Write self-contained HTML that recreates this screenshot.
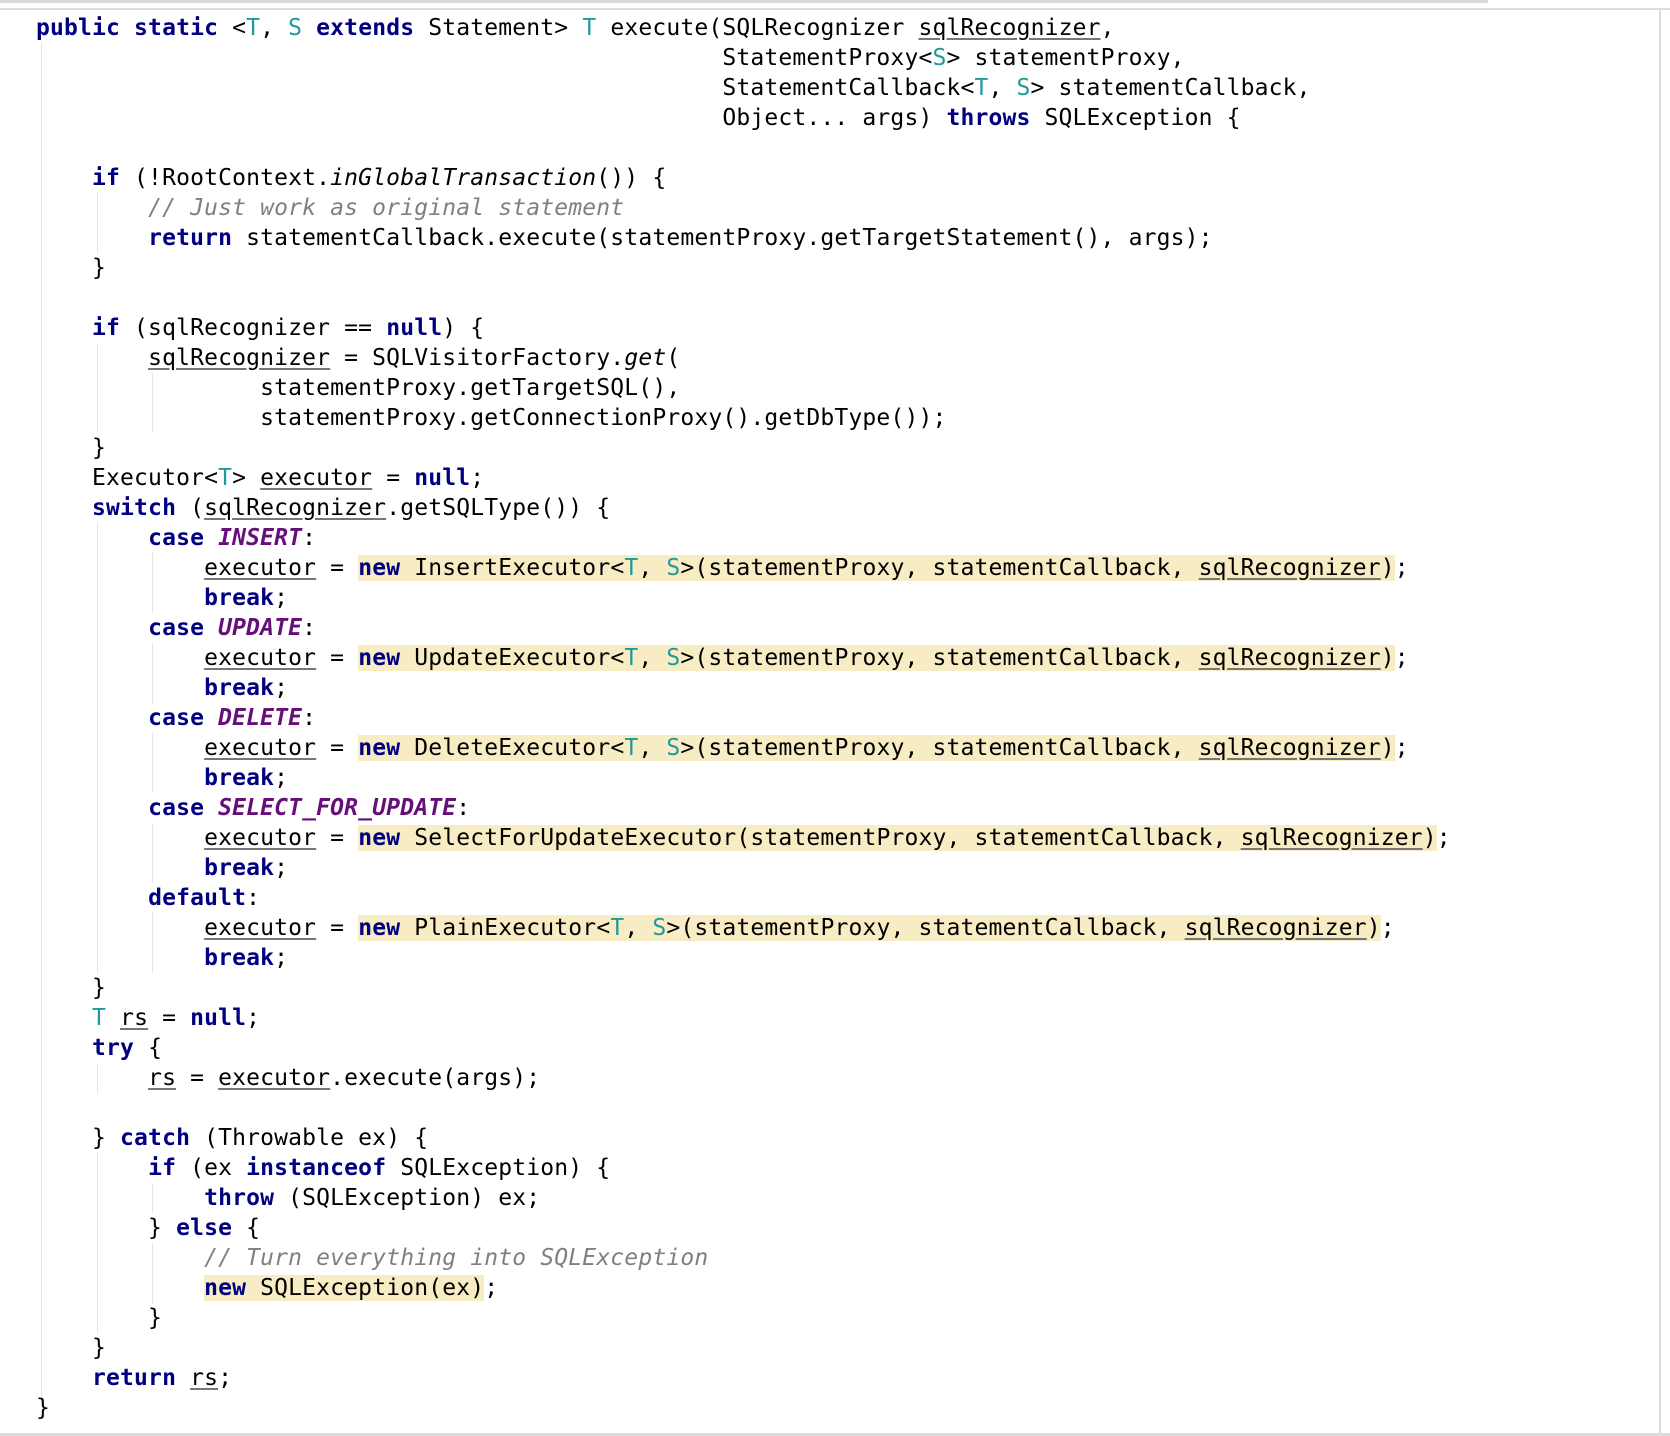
<!DOCTYPE html>
<html><head><meta charset="utf-8"><style>
html,body{margin:0;padding:0;background:#fff;width:1670px;height:1436px;overflow:hidden;position:relative}
pre{position:absolute;left:36px;top:13px;margin:0;font-family:"DejaVu Sans Mono","Liberation Mono",monospace;font-size:23px;line-height:30px;letter-spacing:0.16px;color:#000;}
.k{color:#000080;font-weight:bold}
.t{color:#20999d}
.c{color:#660e7a;font-weight:bold;font-style:italic}
.m{color:#808080;font-style:italic}
.i{font-style:italic}
.u{text-decoration:underline;text-decoration-color:#777;text-underline-offset:3px}
.h{background:#f7ecc4}
.g{position:absolute;width:1px;background:#e6e6e6}
</style></head><body>
<div style="position:absolute;left:0;top:0;width:1488px;height:3px;background:#d8d8d8"></div>
<div style="position:absolute;left:0;top:8px;width:1670px;height:2px;background:#dcdcdc"></div>
<div style="position:absolute;left:1659px;top:9px;width:2px;height:1427px;background:#dcdcdc"></div>
<div style="position:absolute;left:0;top:1433px;width:1670px;height:3px;background:#dcdcdc"></div>
<div class="g" style="left:41px;top:43px;height:1360px"></div>
<div class="g" style="left:97px;top:193px;height:60px"></div>
<div class="g" style="left:97px;top:343px;height:90px"></div>
<div class="g" style="left:97px;top:523px;height:450px"></div>
<div class="g" style="left:97px;top:1063px;height:30px"></div>
<div class="g" style="left:97px;top:1153px;height:180px"></div>
<div class="g" style="left:152px;top:373px;height:60px"></div>
<div class="g" style="left:152px;top:553px;height:60px"></div>
<div class="g" style="left:152px;top:643px;height:60px"></div>
<div class="g" style="left:152px;top:733px;height:60px"></div>
<div class="g" style="left:152px;top:823px;height:60px"></div>
<div class="g" style="left:152px;top:913px;height:60px"></div>
<div class="g" style="left:152px;top:1183px;height:30px"></div>
<div class="g" style="left:152px;top:1243px;height:60px"></div>
<pre><span class="k">public static</span> &lt;<span class="t">T</span>, <span class="t">S</span> <span class="k">extends</span> Statement&gt; <span class="t">T</span> execute(SQLRecognizer <span class="u">sqlRecognizer</span>,
                                                 StatementProxy&lt;<span class="t">S</span>&gt; statementProxy,
                                                 StatementCallback&lt;<span class="t">T</span>, <span class="t">S</span>&gt; statementCallback,
                                                 Object... args) <span class="k">throws</span> SQLException {

    <span class="k">if</span> (!RootContext.<span class="i">inGlobalTransaction</span>()) {
        <span class="m">// Just work as original statement</span>
        <span class="k">return</span> statementCallback.execute(statementProxy.getTargetStatement(), args);
    }

    <span class="k">if</span> (sqlRecognizer == <span class="k">null</span>) {
        <span class="u">sqlRecognizer</span> = SQLVisitorFactory.<span class="i">get</span>(
                statementProxy.getTargetSQL(),
                statementProxy.getConnectionProxy().getDbType());
    }
    Executor&lt;<span class="t">T</span>&gt; <span class="u">executor</span> = <span class="k">null</span>;
    <span class="k">switch</span> (<span class="u">sqlRecognizer</span>.getSQLType()) {
        <span class="k">case</span> <span class="c">INSERT</span>:
            <span class="u">executor</span> = <span class="h"><span class="k">new</span> InsertExecutor&lt;<span class="t">T</span>, <span class="t">S</span>&gt;(statementProxy, statementCallback, <span class="u">sqlRecognizer</span>)</span>;
            <span class="k">break</span>;
        <span class="k">case</span> <span class="c">UPDATE</span>:
            <span class="u">executor</span> = <span class="h"><span class="k">new</span> UpdateExecutor&lt;<span class="t">T</span>, <span class="t">S</span>&gt;(statementProxy, statementCallback, <span class="u">sqlRecognizer</span>)</span>;
            <span class="k">break</span>;
        <span class="k">case</span> <span class="c">DELETE</span>:
            <span class="u">executor</span> = <span class="h"><span class="k">new</span> DeleteExecutor&lt;<span class="t">T</span>, <span class="t">S</span>&gt;(statementProxy, statementCallback, <span class="u">sqlRecognizer</span>)</span>;
            <span class="k">break</span>;
        <span class="k">case</span> <span class="c">SELECT_FOR_UPDATE</span>:
            <span class="u">executor</span> = <span class="h"><span class="k">new</span> SelectForUpdateExecutor(statementProxy, statementCallback, <span class="u">sqlRecognizer</span>)</span>;
            <span class="k">break</span>;
        <span class="k">default</span>:
            <span class="u">executor</span> = <span class="h"><span class="k">new</span> PlainExecutor&lt;<span class="t">T</span>, <span class="t">S</span>&gt;(statementProxy, statementCallback, <span class="u">sqlRecognizer</span>)</span>;
            <span class="k">break</span>;
    }
    <span class="t">T</span> <span class="u">rs</span> = <span class="k">null</span>;
    <span class="k">try</span> {
        <span class="u">rs</span> = <span class="u">executor</span>.execute(args);

    } <span class="k">catch</span> (Throwable ex) {
        <span class="k">if</span> (ex <span class="k">instanceof</span> SQLException) {
            <span class="k">throw</span> (SQLException) ex;
        } <span class="k">else</span> {
            <span class="m">// Turn everything into SQLException</span>
            <span class="h"><span class="k">new</span> SQLException(ex)</span>;
        }
    }
    <span class="k">return</span> <span class="u">rs</span>;
}</pre>
</body></html>
